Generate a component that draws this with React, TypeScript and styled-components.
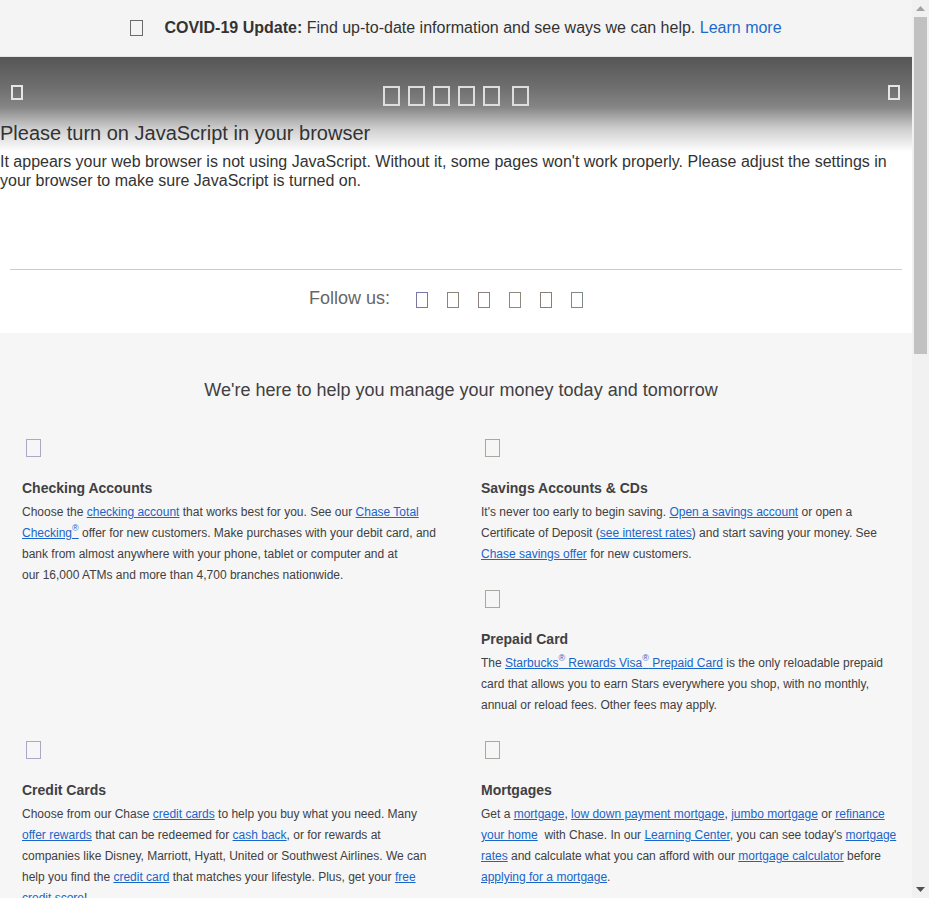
import React from "react";
import styled, { createGlobalStyle } from "styled-components";

const GlobalStyle = createGlobalStyle`
  html, body { margin: 0; padding: 0; height: 100%; overflow: hidden; }
  body {
    background: #ffffff;
    font-family: "Liberation Sans", Arial, Helvetica, sans-serif;
    color: #333333;
  }
`;

const Frame = styled.div`
  display: flex;
  height: 100vh;
`;

const Viewport = styled.div`
  flex: 1;
  min-width: 0;
  overflow-y: auto;
  scrollbar-width: none;
  &::-webkit-scrollbar { display: none; }
`;

const ScrollBar = styled.div`
  width: 17px;
  flex: none;
  background: #f1f1f1;
  display: flex;
  flex-direction: column;
  align-items: center;
`;

const ScrollButton = styled.div`
  height: 17px;
  width: 17px;
  display: flex;
  align-items: center;
  justify-content: center;
  flex: none;
`;

const ScrollTrack = styled.div`
  flex: 1;
  width: 100%;
  padding: 0 2px;
  box-sizing: border-box;
`;

const ScrollThumb = styled.div`
  height: 337px;
  background: #c1c1c1;
`;

const Glyph = styled.span<{ $w: number; $h: number; $color: string; $bw?: number }>`
  display: inline-block;
  box-sizing: border-box;
  width: ${(p) => p.$w}px;
  height: ${(p) => p.$h}px;
  border: ${(p) => p.$bw ?? 1}px solid ${(p) => p.$color};
  flex: none;
`;

const Banner = styled.div`
  height: 56px;
  background: #f4f4f4;
  border-bottom: 1px solid #e4e4e4;
  display: flex;
  align-items: center;
  justify-content: center;
  font-size: 16px;
  color: #333333;
`;

const BannerText = styled.span`
  margin-left: 21px;
  line-height: 20px;
  b { font-weight: bold; }
  a { color: #1c6acb; text-decoration: none; }
`;

const Header = styled.header`
  background: linear-gradient(
    to bottom,
    #565656 0px,
    #6e6e6e 30px,
    #858585 50px,
    #cfcfcf 72px,
    #ffffff 95px
  );
`;

const IconRow = styled.div`
  display: flex;
  justify-content: space-between;
  align-items: flex-start;
  padding: 28px 12px 0 11px;
`;

const Logo = styled.div`
  display: flex;
  gap: 8px;
  margin-top: 1px;
`;

const LogoMark = styled(Glyph)<{ $spaced?: boolean }>`
  margin-left: ${(p) => (p.$spaced ? 4 : 0)}px;
`;

const Notice = styled.div`
  padding-top: 15px;
`;

const NoticeTitle = styled.h2`
  margin: 0;
  font-size: 20px;
  font-weight: normal;
  line-height: 24px;
  color: #333333;
`;

const NoticeText = styled.p`
  margin: 7px 0 0;
  font-size: 16px;
  line-height: 19px;
  color: #333333;
`;

const Rule = styled.hr`
  margin: 79px 10px 0;
  border: 0;
  border-top: 1px solid #cccccc;
  height: 0;
`;

const FollowRow = styled.div`
  display: flex;
  align-items: center;
  justify-content: center;
  padding: 17px 20px 24px 0;
  background: #ffffff;
`;

const FollowLabel = styled.span`
  font-size: 18px;
  line-height: 22px;
  color: #666666;
  margin-right: 26px;
`;

const FollowIcons = styled.div`
  display: flex;
  gap: 19px;
  margin-top: 4px;
`;

const Main = styled.main`
  background: #f6f6f6;
  padding: 46px 0 60px;
`;

const Heading = styled.h2`
  margin: 0 0 38px;
  text-align: center;
  font-size: 18px;
  font-weight: normal;
  line-height: 22px;
  color: #414042;
  padding-left: 10px;
`;

const Grid = styled.div`
  display: grid;
  grid-template-columns: 418px 418px;
  column-gap: 41px;
  padding: 0 13px 0 22px;
`;

const Stack = styled.div``;

const Item = styled.section`
  margin-bottom: 25px;
`;

const ItemIcon = styled(Glyph)`
  margin-left: 4px;
  display: block;
`;

const ItemTitle = styled.h3`
  margin: 21px 0 0;
  font-size: 14px;
  font-weight: bold;
  line-height: 20px;
  color: #414042;
`;

const ItemBody = styled.p`
  margin: 4px 0 0;
  font-size: 12px;
  line-height: 21px;
  color: #414042;
`;

const Link = styled.a`
  color: #1a65c9;
  text-decoration: underline;
  cursor: pointer;
  sup {
    font-size: 9px;
    line-height: 0;
    vertical-align: 6px;
  }
`;

const Footer = styled.footer`
  background: #ffffff;
  border-top: 1px solid #e0e0e0;
  padding: 30px 22px 60px;
  font-size: 12px;
  line-height: 19px;
  color: #666666;
`;

const FooterColumns = styled.div`
  display: grid;
  grid-template-columns: repeat(4, 1fr);
  gap: 20px;
  margin-bottom: 30px;
`;

const FooterColumn = styled.div`
  display: flex;
  flex-direction: column;
  gap: 8px;
  h4 {
    margin: 0 0 4px;
    font-size: 13px;
    color: #414042;
  }
  a { color: #1a65c9; text-decoration: none; }
`;

const FooterNote = styled.p`
  margin: 0 0 12px;
`;

const R = () => <sup>®</sup>;

type Sec = { title: string; icon: string; body: React.ReactNode };

const checking: Sec = {
  title: "Checking Accounts",
  icon: "#a9a9c6",
  body: (
    <>
      Choose the <Link>checking account</Link> that works best for you. See our{" "}
      <Link>
        Chase Total Checking<R />
      </Link>{" "}
      offer for new customers. Make purchases with your debit card, and bank from almost anywhere
      with your phone, tablet or computer and at our{"\u00a0"}16,000 ATMs and more than 4,700
      branches nationwide.
    </>
  ),
};

const savings: Sec = {
  title: "Savings Accounts & CDs",
  icon: "#a8a8a0",
  body: (
    <>
      It's never too early to begin saving. <Link>Open a savings account</Link> or open a
      Certificate of Deposit (<Link>see interest rates</Link>) and start saving your money. See{" "}
      <Link>Chase savings offer</Link> for new customers.
    </>
  ),
};

const prepaid: Sec = {
  title: "Prepaid Card",
  icon: "#a8a8a0",
  body: (
    <>
      The{" "}
      <Link>
        Starbucks<R /> Rewards Visa<R /> Prepaid Card
      </Link>{" "}
      is the only reloadable prepaid card that allows you to earn Stars everywhere you shop, with
      no monthly, annual or reload fees. Other fees may apply.
    </>
  ),
};

const credit: Sec = {
  title: "Credit Cards",
  icon: "#a9a9c6",
  body: (
    <>
      Choose from our Chase <Link>credit cards</Link> to help you buy what you need. Many{" "}
      <Link>offer rewards</Link> that can be redeemed for <Link>cash back</Link>, or for rewards at
      companies like Disney, Marriott, Hyatt, United or Southwest Airlines. We can help you find
      the <Link>credit card</Link> that matches your lifestyle. Plus, get your{" "}
      <Link>free credit score</Link>!
    </>
  ),
};

const mortgages: Sec = {
  title: "Mortgages",
  icon: "#a8a8a0",
  body: (
    <>
      Get a <Link>mortgage</Link>, <Link>low down payment mortgage</Link>,{" "}
      <Link>jumbo mortgage</Link> or <Link>refinance your home</Link>
      {"\u00a0"} with Chase. In our <Link>Learning Center</Link>, you can see today's{" "}
      <Link>mortgage rates</Link> and calculate what you can afford with our{" "}
      <Link>mortgage calculator</Link> before <Link>applying for a mortgage</Link>.
    </>
  ),
};

const homeEquity: Sec = {
  title: "Home Equity Line of Credit",
  icon: "#a9a9c6",
  body: (
    <>
      Use a <Link>home equity line of credit</Link> to make home improvements, pay for education
      expenses or consolidate debt. See today's <Link>home equity rates</Link> and use our{" "}
      <Link>home equity calculator</Link> to see how much you may be able to borrow.
    </>
  ),
};

const auto: Sec = {
  title: "Auto Loans",
  icon: "#a8a8a0",
  body: (
    <>
      Chase Auto is here to help you get the right car. <Link>Apply for auto financing</Link> for
      a new or used car with Chase. Use the <Link>payment calculator</Link> to estimate monthly
      payments. Check out the <Link>Chase Auto Education Center</Link> to get information and tips
      from our auto experts.
    </>
  ),
};

const investing: Sec = {
  title: "Investing",
  icon: "#a9a9c6",
  body: (
    <>
      Invest your way. Work one-on-one with a <Link>J.P. Morgan Advisor</Link> or invest on your
      own with <Link>J.P. Morgan Self-Directed Investing</Link>. Learn more about{" "}
      <Link>retirement planning</Link> and <Link>college savings</Link>.
    </>
  ),
};

const privateClient: Sec = {
  title: "Chase Private Client",
  icon: "#a8a8a0",
  body: (
    <>
      <Link>Chase Private Client</Link> offers a dedicated team, priority service and exclusive
      benefits, with no Chase fees on everyday banking. Find out if you qualify at your local
      branch.
    </>
  ),
};

const business: Sec = {
  title: "Business Banking",
  icon: "#a9a9c6",
  body: (
    <>
      With <Link>Chase for Business</Link> you'll receive guidance from a team of business
      professionals who specialize in helping improve cash flow, providing credit solutions, and
      managing payroll. Choose from <Link>business checking</Link>,{" "}
      <Link>small business loans</Link>, <Link>business credit cards</Link>,{" "}
      <Link>merchant services</Link> or visit our <Link>business resource center</Link>.
    </>
  ),
};

const commercial: Sec = {
  title: "Commercial Banking",
  icon: "#a8a8a0",
  body: (
    <>
      <Link>Commercial Banking</Link> provides credit, financing, treasury and payment solutions
      to midsized businesses, large corporations and real estate owners and investors. Learn about{" "}
      <Link>Commercial Term Lending</Link> and <Link>Real Estate Banking</Link>.
    </>
  ),
};

const mobile: Sec = {
  title: "Chase Mobile App",
  icon: "#a9a9c6",
  body: (
    <>
      Bank on the go with the <Link>Chase Mobile® app</Link>. Deposit checks, pay bills, send
      money with <Link>Zelle®</Link> and manage your accounts from almost anywhere.
    </>
  ),
};

const security: Sec = {
  title: "Security Center",
  icon: "#a8a8a0",
  body: (
    <>
      Learn how we protect you and your accounts, and what you can do to help. Visit our{" "}
      <Link>Security Center</Link> to see tips on how to <Link>avoid fraud</Link> and{" "}
      <Link>protect your identity</Link>.
    </>
  ),
};

const SectionItem = ({ s }: { s: Sec }) => (
  <Item>
    <ItemIcon $w={15} $h={18} $color={s.icon} />
    <ItemTitle>{s.title}</ItemTitle>
    <ItemBody>{s.body}</ItemBody>
  </Item>
);

const followColors = ["#7777aa", "#8a8478", "#8f7f7f", "#8c8a78", "#8a7f78", "#7f8a8a"];

const footerCols = [
  { title: "About us", links: ["Our company", "Careers", "Investor relations", "Media center"] },
  { title: "Support", links: ["Contact us", "Customer service", "Find ATM & branch", "Site map"] },
  { title: "Legal", links: ["Privacy", "Security", "Terms of use", "Accessibility"] },
  { title: "Resources", links: ["Chase Mobile", "Pay bills", "Send money with Zelle", "Español"] },
];

const Arrow = ({ up, color }: { up?: boolean; color: string }) => (
  <svg width="9" height="5" viewBox="0 0 9 5" aria-hidden="true">
    <path d={up ? "M0 5 L4.5 0 L9 5 Z" : "M0 0 L9 0 L4.5 5 Z"} fill={color} />
  </svg>
);

export default function App() {
  return (
    <Frame>
      <GlobalStyle />
      <Viewport>
        <Banner>
          <Glyph $w={13} $h={16} $color="#6b6b6b" />
          <BannerText>
            <b>COVID-19 Update:</b> Find up-to-date information and see ways we can help.{" "}
            <a>Learn more</a>
          </BannerText>
        </Banner>
        <Header>
          <IconRow>
            <Glyph $w={12} $h={15} $color="#e6e6e6" $bw={2} />
            <Logo>
              {[0, 1, 2, 3, 4].map((i) => (
                <LogoMark key={i} $w={17} $h={20} $color="#dedede" $bw={2} />
              ))}
              <LogoMark $spaced $w={17} $h={20} $color="#dedede" $bw={2} />
            </Logo>
            <Glyph $w={12} $h={15} $color="#e6e6e6" $bw={2} />
          </IconRow>
          <Notice>
            <NoticeTitle>Please turn on JavaScript in your browser</NoticeTitle>
            <NoticeText>
              It appears your web browser is not using JavaScript. Without it, some pages won't
              work properly. Please adjust the settings in your browser to make sure JavaScript is
              turned on.
            </NoticeText>
          </Notice>
        </Header>
        <Rule />
        <FollowRow>
          <FollowLabel>Follow us:</FollowLabel>
          <FollowIcons>
            {followColors.map((c, i) => (
              <Glyph key={i} $w={12} $h={16} $color={c} />
            ))}
          </FollowIcons>
        </FollowRow>
        <Main>
          <Heading>We're here to help you manage your money today and tomorrow</Heading>
          <Grid>
            <SectionItem s={checking} />
            <Stack>
              <SectionItem s={savings} />
              <SectionItem s={prepaid} />
            </Stack>
            <SectionItem s={credit} />
            <SectionItem s={mortgages} />
            <SectionItem s={homeEquity} />
            <SectionItem s={auto} />
            <SectionItem s={investing} />
            <SectionItem s={privateClient} />
            <SectionItem s={business} />
            <SectionItem s={commercial} />
            <SectionItem s={mobile} />
            <SectionItem s={security} />
          </Grid>
        </Main>
        <Footer>
          <FooterColumns>
            {footerCols.map((c) => (
              <FooterColumn key={c.title}>
                <h4>{c.title}</h4>
                {c.links.map((l) => (
                  <a key={l}>{l}</a>
                ))}
              </FooterColumn>
            ))}
          </FooterColumns>
          <FooterNote>
            "Chase," "JPMorgan," "JPMorgan Chase," the JPMorgan Chase logo and the Octagon Symbol
            are trademarks of JPMorgan Chase Bank, N.A. JPMorgan Chase Bank, N.A. is a wholly-owned
            subsidiary of JPMorgan Chase &amp; Co.
          </FooterNote>
          <FooterNote>
            Investing involves market risk, including possible loss of principal, and there is no
            guarantee that investment objectives will be achieved.
          </FooterNote>
          <FooterNote>
            Deposit products provided by JPMorgan Chase Bank, N.A. Member FDIC. Credit cards are
            issued by JPMorgan Chase Bank, N.A. Home lending products offered by JPMorgan Chase
            Bank, N.A. and are subject to credit approval.
          </FooterNote>
          <FooterNote>© 2020 JPMorgan Chase &amp; Co.</FooterNote>
        </Footer>
      </Viewport>
      <ScrollBar aria-hidden="true">
        <ScrollButton>
          <Arrow up color="#a3a3a3" />
        </ScrollButton>
        <ScrollTrack>
          <ScrollThumb />
        </ScrollTrack>
        <ScrollButton>
          <Arrow color="#505050" />
        </ScrollButton>
      </ScrollBar>
    </Frame>
  );
}
